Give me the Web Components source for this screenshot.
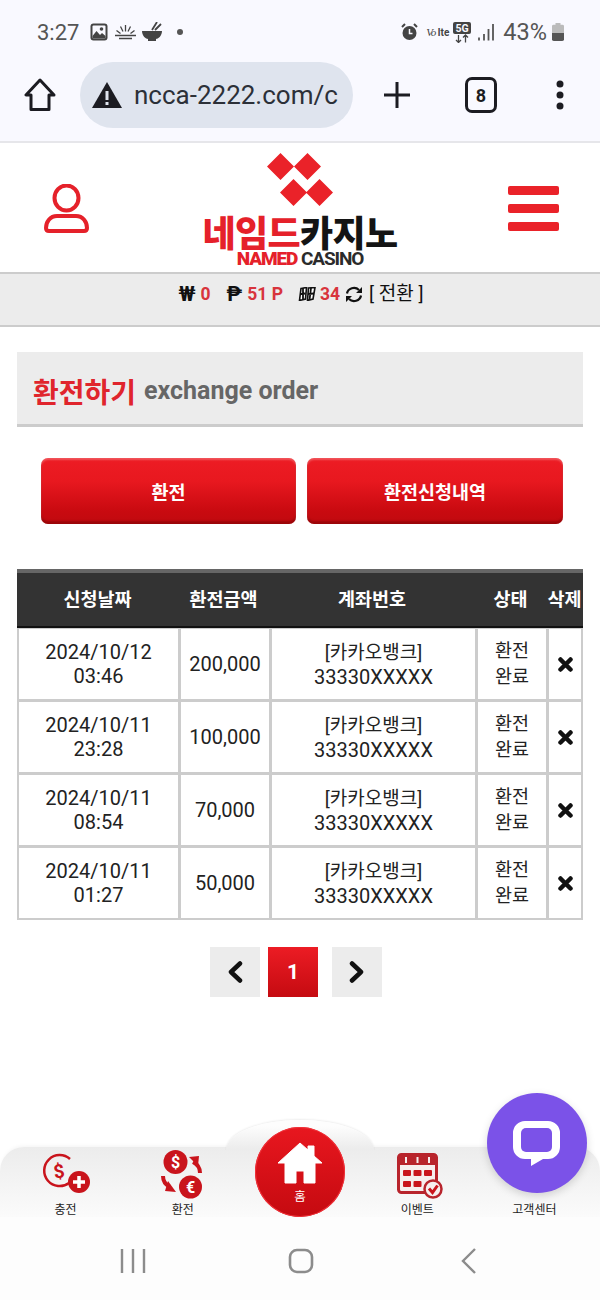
<!DOCTYPE html>
<html lang="ko">
<head>
<meta charset="utf-8">
<title>환전하기</title>
<style>
    html, body { margin: 0; height: 100%; }
    body {
        display: flex;
        flex-direction: column;
        height: 1300px;
        overflow: hidden;
        background: #fff;
        color: #222;
        font-family: Roboto, "Noto Sans CJK KR", sans-serif;
    }
    main-area { flex: 1; }
</style>
</head>
<body>
<status-bar></status-bar>
<browser-bar url="ncca-2222.com/c" tabs="8"></browser-bar>
<site-header></site-header>
<balance-bar></balance-bar>
<main-area>
    <page-title sub="exchange order">환전하기</page-title>
    <action-buttons>
        <red-button>환전</red-button>
        <red-button>환전신청내역</red-button>
    </action-buttons>
    <order-table>
        <order-row date="2024/10/12" time="03:46" amount="200,000"></order-row>
        <order-row date="2024/10/11" time="23:28" amount="100,000"></order-row>
        <order-row date="2024/10/11" time="08:54" amount="70,000"></order-row>
        <order-row date="2024/10/11" time="01:27" amount="50,000"></order-row>
    </order-table>
    <page-nav></page-nav>
</main-area>
<bottom-nav></bottom-nav>
<android-nav></android-nav>

<script>
class StatusBar extends HTMLElement {
    constructor() {
        super();
        this.attachShadow({ mode: 'open' });
    }

    connectedCallback() {
        this.shadowRoot.innerHTML = `
            <style>
            :host {
                display: flex;
                align-items: center;
                height: 63px;
                padding: 1px 36px 0 37px;
                box-sizing: border-box;
                background: #f9f9ff;
                color: #555;
                font-size: 22px;
            }
            svg { display: block; flex: none; }
            .group { display: flex; align-items: center; }
            .right { margin-left: auto; }
            .volte { margin-left: 8px; width: 22px; white-space: nowrap; color: #444; font: 700 10px Roboto, sans-serif; }
            .volte i { font: italic 400 11px "Liberation Serif", serif; letter-spacing: -1px; }
            </style>
            <div class="group">
                <span>3:27</span>
                <svg style="margin-left:11px" width="18" height="18" viewBox="0 0 18 18"><rect x="0.500" y="0.500" width="17" height="17" rx="3" fill="#444"/><rect x="2.500" y="2.500" width="13" height="13" rx="1" fill="#f9f9ff"/><circle cx="11.500" cy="6" r="1.800" fill="#444"/><path d="M2.500 13l4-5 3.500 4 2-2 3.500 3v2.500h-13z" fill="#444"/></svg>
                <svg style="margin-left:7px" width="21" height="18" viewBox="0 0 21 18"><path d="M0 12.500h21M4 15.500h13M10.500 2v6.500M5.500 3.500l2.500 5M15.500 3.500l-2.500 5M1.500 7.500l4 3M19.500 7.500l-4 3" stroke="#444" stroke-width="1.300" fill="none"/></svg>
                <svg style="margin-left:6px" width="20" height="20" viewBox="0 0 20 20"><path d="M0 9h20c0 5-4 8-6 8v2H6v-2c-2 0-6-3-6-8z" fill="#444"/><path d="M10 8l5-8M13 8l6-6" stroke="#444" stroke-width="1.800"/></svg>
                <svg style="margin-left:15px" width="6" height="6" viewBox="0 0 6 6"><circle cx="3" cy="3" r="3" fill="#555"/></svg>
            </div>
            <div class="group right">
                <svg width="17" height="18" viewBox="0 0 17 18"><circle cx="8.500" cy="10" r="7" fill="#444"/><path d="M8.500 6v4.500h3" stroke="#f9f9ff" stroke-width="1.500" fill="none"/><path d="M1 4l3-3M16 4l-3-3" stroke="#444" stroke-width="2"/></svg>
                <span class="volte"><i>Vo</i> lte</span>
                <svg style="margin-left:5px" width="18" height="21" viewBox="0 0 18 21"><rect width="18" height="12" rx="2" fill="#444"/><text x="9" y="10" text-anchor="middle" font-family="Roboto" font-weight="700" font-size="10.500" fill="#f9f9ff">5G</text><path d="M5.500 13v7.500M3 18l2.500 2.500L8 18M12.500 20.500V13M10 15.500l2.500-2.500 2.500 2.500" stroke="#444" stroke-width="1.300" fill="none"/></svg>
                <svg style="margin-left:7px" width="16" height="18" viewBox="0 0 16 18"><path d="M1 14.500v3M6 11v6.500M10.500 6v11.500M15 1v16.500" stroke="#555" stroke-width="1.800"/></svg>
                <span style="margin-left:9px;font-size:23.500px">43%</span>
                <svg style="margin-left:5px" width="12" height="18" viewBox="0 0 12 20" preserveAspectRatio="none"><path d="M3.500 0h5v2h2a1.500 1.500 0 0 1 1.500 1.500V18a2 2 0 0 1-2 2H2a2 2 0 0 1-2-2V3.500A1.500 1.500 0 0 1 1.500 2h2z" fill="#bbb"/><path d="M0 11h12v7a2 2 0 0 1-2 2H2a2 2 0 0 1-2-2z" fill="#555"/></svg>
            </div>
        `;
    }
}

class BrowserBar extends HTMLElement {
    constructor() {
        super();
        this.attachShadow({ mode: 'open' });
    }

    connectedCallback() {
        this.shadowRoot.innerHTML = `
            <style>
            :host {
                display: flex;
                align-items: center;
                height: 80px;
                padding-left: 24px;
                box-sizing: border-box;
                background: #f9f9ff;
                border-bottom: 2px solid #e6e6ea;
                color: #1c1c22;
            }
            svg { display: block; flex: none; }
            .url {
                display: flex;
                align-items: center;
                width: 273px;
                height: 66px;
                margin: -14px 0 0 24px;
                padding-left: 11px;
                box-sizing: border-box;
                border-radius: 33px;
                background: #dfe4ee;
                font-size: 26px;
                white-space: nowrap;
                overflow: hidden;
            }
            .url span { margin-left: 11px; color: #2c3038; }
            .tools { display: flex; align-items: center; margin-top: -14px; }
            .tabs {
                display: flex;
                align-items: center;
                justify-content: center;
                width: 26px;
                height: 30px;
                margin-left: 54px;
                border: 3px solid #1c1c22;
                border-radius: 7px;
                font-size: 18px;
                font-weight: 700;
            }
            </style>
            <svg style="margin-top:-14px" width="32" height="34" viewBox="0 0 32 34"><path d="M16 2L2 17h5v14.500h18V17h5z" fill="none" stroke="#1c1c22" stroke-width="3" stroke-linejoin="round"/></svg>
            <div class="url">
                <svg width="32" height="28" viewBox="0 0 32 28"><path d="M16 1L31 27H1z" fill="#1c1c22"/><path d="M14.500 10h3v9h-3zM14.500 21h3v3h-3z" fill="#dfe4ee"/></svg>
                <span>${this.getAttribute('url')}</span>
            </div>
            <div class="tools">
                <svg style="margin-left:30px" width="28" height="28" viewBox="0 0 28 28"><path d="M14 1v26M1 14h26" stroke="#1c1c22" stroke-width="3"/></svg>
                <div class="tabs">${this.getAttribute('tabs')}</div>
                <svg style="margin-left:58px" width="10" height="30" viewBox="0 0 10 30"><circle cx="5" cy="4" r="3.500" fill="#1c1c22"/><circle cx="5" cy="15" r="3.500" fill="#1c1c22"/><circle cx="5" cy="26" r="3.500" fill="#1c1c22"/></svg>
            </div>
        `;
    }
}

class SiteHeader extends HTMLElement {
    constructor() {
        super();
        this.attachShadow({ mode: 'open' });
    }

    connectedCallback() {
        this.shadowRoot.innerHTML = `
            <style>
            :host {
                display: grid;
                grid-template-columns: 1fr auto 1fr;
                align-items: center;
                height: 131px;
                box-sizing: border-box;
                border-bottom: 2px solid #ccc;
                background: #fff;
            }
            svg { display: block; }
            .user { margin: 3px 0 0 44px; }
            .menu { margin: 1px 41px 0 auto; display: grid; gap: 9px; }
            .menu i { display: block; width: 51px; height: 9px; border-radius: 2px; background: #ea2229; }
            .logo { align-self: start; display: flex; flex-direction: column; align-items: center; padding-top: 10px; }
            .ko {
                margin-top: 7px;
                font: 900 36px/37px "Noto Sans CJK KR", sans-serif;
                letter-spacing: -.6px;
                white-space: nowrap;
                color: #141414;
            }
            .ko b { font-weight: 900; color: #e5212a; }
            .en {
                font: 700 19px/17px Roboto, sans-serif;
                letter-spacing: -1.100px;
                white-space: nowrap;
                color: #2b2b2b;
            }
            .en b { color: #e5212a; }
            </style>
            <svg class="user" width="45" height="50" viewBox="0 0 45 50"><ellipse cx="22.500" cy="14" rx="12" ry="12.500" fill="none" stroke="#e5212a" stroke-width="4"/><path d="M13 32h19c7 0 11 6 11 12 0 2-1 3-3 3H5c-2 0-3-1-3-3 0-6 4-12 11-12z" fill="none" stroke="#e5212a" stroke-width="4" stroke-linejoin="round"/></svg>
            <div class="logo">
                <svg width="66" height="53" viewBox="0 0 66 53"><path d="M13.500 0L27 13.500 13.500 27 0 13.500zM40.500 0L54 13.500 40.500 27 27 13.500zM26.500 26L40 39.500 26.500 53 13 39.500zM52.500 26L66 39.500 52.500 53 39 39.500z" fill="#ea2229"/></svg>
                <div class="ko"><b>네임드</b>카지노</div>
                <div class="en"><b>NAMED</b> CASINO</div>
            </div>
            <div class="menu"><i></i><i></i><i></i></div>
        `;
    }
}

class BalanceBar extends HTMLElement {
    constructor() {
        super();
        this.attachShadow({ mode: 'open' });
    }

    connectedCallback() {
        this.shadowRoot.innerHTML = `
            <style>
            :host {
                display: flex;
                justify-content: center;
                height: 53px;
                box-sizing: border-box;
                padding: 7px 0 0 2px;
                border-bottom: 2px solid #ccc;
                background: #ececec;
                font-size: 17.500px;
                line-height: 26px;
                color: #111;
            }
            .row { display: flex; align-items: flex-start; white-space: nowrap; }
            b { font-weight: 700; color: #d8343c; }
            .sym { font-size: 21px; font-weight: 700; }
            .swap { font-size: 19px; }
            svg { display: block; }
            </style>
            <div class="row">
                <span class="sym">₩</span><b style="margin-left:5px">0</b>
                <span class="sym" style="margin-left:16px">₱</span><b style="margin-left:5px">51 P</b>
                <svg style="margin:6px 0 0 15px" width="18" height="14" viewBox="0 0 18 14"><path d="M3 1.500l5.500-1L7.500 12l-6 1.500zM10.500 1l6.500-.5L15 12l-5.500 1.500z" fill="#fff" stroke="#111" stroke-width="1.600"/><path d="M2.500 7l5-.5M10 7l6-.5M5 1v12M13 1l-1.500 12" stroke="#111" stroke-width="1.800"/></svg>
                <b style="margin-left:4px">34</b>
                <svg style="margin:5px 0 0 5px" width="18" height="17" viewBox="0 0 18 17"><path d="M2 7.500a7 6.500 0 0 1 12-3.500M16 9.500a7 6.500 0 0 1-12 3.500" fill="none" stroke="#111" stroke-width="2.200"/><path d="M17 1v6h-6zM1 16v-6h6z" fill="#111"/></svg>
                <span class="swap" style="margin-left:6px">[ 전환 ]</span>
            </div>
        `;
    }
}

class PageTitle extends HTMLElement {
    constructor() {
        super();
        this.attachShadow({ mode: 'open' });
    }

    connectedCallback() {
        this.shadowRoot.innerHTML = `
            <style>
            :host {
                display: flex;
                align-items: center;
                gap: 8px;
                height: 75px;
                margin: 25px 17px 0;
                padding: 5px 16px 0;
                box-sizing: border-box;
                border-bottom: 3px solid #ccc;
                background: #ececec;
                font-weight: 700;
            }
            .ko { font-size: 28px; color: #e0252d; }
            .sub { font-size: 25px; color: #666; }
            </style>
            <span class="ko"><slot></slot></span>
            <span class="sub">${this.getAttribute('sub')}</span>
        `;
    }
}

class ActionButtons extends HTMLElement {
    constructor() {
        super();
        this.attachShadow({ mode: 'open' });
        this.shadowRoot.innerHTML = `
            <style>
            :host {
                display: grid;
                grid-template-columns: 255px 256px;
                gap: 11px;
                margin: 31px 37px 0 41px;
            }
            </style>
            <slot></slot>
        `;
    }
}

class RedButton extends HTMLElement {
    constructor() {
        super();
        this.attachShadow({ mode: 'open' });
        this.shadowRoot.innerHTML = `
            <style>
            :host {
                display: flex;
                align-items: center;
                justify-content: center;
                height: 66px;
                border-radius: 7px;
                background: linear-gradient(#ed1c24 0%, #e8181f 35%, #c90a10 80%, #c00a0f 100%);
                box-shadow: inset 0 2px 2px rgba(255,255,255,.25), inset 0 -3px 2px rgba(110,0,0,.45);
                color: #fff;
                font-size: 18.500px;
                font-weight: 700;
            }
            </style>
            <slot></slot>
        `;
    }
}

class OrderTable extends HTMLElement {
    constructor() {
        super();
        this.attachShadow({ mode: 'open' });
        this.shadowRoot.innerHTML = `
            <style>
            :host {
                display: block;
                margin: 45px 17px 0;
                background: #ccc;
            }
            .head {
                display: grid;
                grid-template-columns: 161px 91px 206px 71px 37px;
                align-items: center;
                height: 59px;
                padding-bottom: 3px;
                box-sizing: border-box;
                border-top: 4px solid #666;
                border-bottom: 2px solid #111;
                background: #333;
                color: #fff;
                font-size: 18.500px;
                font-weight: 700;
                text-align: center;
                white-space: nowrap;
            }
            .rows {
                display: grid;
                row-gap: 3px;
                padding: 1px 2px 2px;
            }
            </style>
            <div class="head">
                <span>신청날짜</span><span>환전금액</span><span>계좌번호</span><span>상태</span><span>삭제</span>
            </div>
            <div class="rows"><slot></slot></div>
        `;
    }
}

class OrderRow extends HTMLElement {
    constructor() {
        super();
        this.attachShadow({ mode: 'open' });
    }

    connectedCallback() {
        this.shadowRoot.innerHTML = `
            <style>
            :host {
                display: grid;
                grid-template-columns: 159px 88px 203px 68px 32px;
                column-gap: 3px;
                height: 70px;
                font-size: 20px;
                line-height: 24px;
                color: #222;
            }
            div {
                display: flex;
                align-items: center;
                justify-content: center;
                background: #fff;
                text-align: center;
            }
            .bank { font-size: 19px; }
            .status { font-size: 18.500px; line-height: 26px; }
            svg { display: block; }
            </style>
            <div><span>${this.getAttribute('date')}<br>${this.getAttribute('time')}</span></div>
            <div>${this.getAttribute('amount')}</div>
            <div><span><span class="bank">[카카오뱅크]</span><br>33330XXXXX</span></div>
            <div class="status"><span>환전<br>완료</span></div>
            <div><svg width="15" height="15" viewBox="0 0 15 15"><path d="M2.500 2.500l10 10M12.500 2.500l-10 10" stroke="#111" stroke-width="4.500" stroke-linecap="round"/></svg></div>
        `;
    }
}

class PageNav extends HTMLElement {
    constructor() {
        super();
        this.attachShadow({ mode: 'open' });
    }

    connectedCallback() {
        this.shadowRoot.innerHTML = `
            <style>
            :host {
                display: flex;
                justify-content: center;
                margin-top: 27px;
                padding-right: 8px;
            }
            div {
                display: flex;
                align-items: center;
                justify-content: center;
                width: 50px;
                height: 50px;
                background: #ececec;
            }
            .on {
                margin: 0 14px 0 8px;
                background: linear-gradient(#ec1c24, #c50b11);
                color: #fff;
                font-size: 21px;
                font-weight: 700;
            }
            </style>
            <div><svg width="16" height="22" viewBox="0 0 16 22"><path d="M13 2.500L4 11l9 8.500" fill="none" stroke="#111" stroke-width="4.500" stroke-linecap="round" stroke-linejoin="round"/></svg></div>
            <div class="on">1</div>
            <div><svg width="16" height="22" viewBox="0 0 16 22"><path d="M3 2.500L12 11l-9 8.500" fill="none" stroke="#111" stroke-width="4.500" stroke-linecap="round" stroke-linejoin="round"/></svg></div>
        `;
    }
}

class BottomNav extends HTMLElement {
    constructor() {
        super();
        this.attachShadow({ mode: 'open' });
    }

    connectedCallback() {
        const red = '#c9141c';
        this.shadowRoot.innerHTML = `
            <style>
            :host {
                position: relative;
                display: grid;
                grid-template-columns: repeat(5, 1fr);
                height: 70px;
                padding: 0 7px;
                background: linear-gradient(#ececec, #fbfbfb);
                border-radius: 24px 24px 0 0;
                box-shadow: 0 -3px 5px -3px rgba(0,0,0,.07);
            }
            .bump {
                position: absolute;
                left: 226px;
                top: -27px;
                width: 148px;
                height: 60px;
                border-radius: 50%;
                background: linear-gradient(#fdfdfd 10%, #ececec 48%);
                box-shadow: 0 -1px 2px rgba(0,0,0,.07);
                clip-path: inset(-6px -6px 30px -6px);
            }
            .item {
                position: relative;
                display: flex;
                flex-direction: column;
                align-items: center;
                height: 70px;
                font-size: 12px;
                color: #222;
                white-space: nowrap;
            }
            .item svg, .item .blank { display: block; height: 50px; margin-top: 3px; overflow: visible; }
            .item span { margin-top: 3px; line-height: 14px; }
            .home {
                position: absolute;
                left: 255px;
                top: -20px;
                display: flex;
                flex-direction: column;
                align-items: center;
                width: 90px;
                height: 90px;
                box-sizing: border-box;
                border-radius: 50%;
                background: linear-gradient(#e8171f, #c50a10);
                box-shadow: inset 0 0 0 1px #f0323a;
                color: #fff;
                font-size: 12.500px;
            }
            .home svg { display: block; margin-top: 15px; }
            .home span { margin-top: 5px; line-height: 16px; }
            .chat {
                position: absolute;
                left: 487px;
                top: -54px;
                display: flex;
                align-items: center;
                justify-content: center;
                width: 100px;
                height: 100px;
                border-radius: 50%;
                background: #7b52e8;
                box-shadow: 0 3px 8px rgba(0,0,0,.15);
            }
            .chat svg { display: block; }
            </style>
            <div class="bump"></div>
            <div class="item">
                <svg width="50" viewBox="0 0 50 50"><path d="M29 9a15.500 15.500 0 1 0-1 24" fill="none" stroke="${red}" stroke-width="2.500"/><text x="18" y="28" text-anchor="middle" font-family="Roboto" font-weight="700" font-size="19" fill="${red}" transform="rotate(-10 18 21)">$</text><circle cx="38" cy="32" r="11" fill="${red}"/><path d="M38 26v12M32 32h12" stroke="#fff" stroke-width="3.500"/></svg>
                <span>충전</span>
            </div>
            <div class="item">
                <svg width="50" viewBox="0 0 50 50"><circle cx="17.500" cy="12" r="12" fill="${red}"/><text x="17.500" y="18" text-anchor="middle" font-family="Roboto" font-weight="700" font-size="16" fill="#fff">$</text><circle cx="32.500" cy="37" r="11.500" fill="${red}"/><text x="32.500" y="43" text-anchor="middle" font-family="Roboto" font-weight="700" font-size="16" fill="#fff">€</text><path d="M42 23c0-6-3-9-7-11" fill="none" stroke="${red}" stroke-width="4"/><path d="M31 7l10-1-1 10z" fill="${red}"/><path d="M5 26c0 6 3 9 7 11" fill="none" stroke="${red}" stroke-width="4"/><path d="M18 42l-11-1 3-10z" fill="${red}"/></svg>
                <span>환전</span>
            </div>
            <div class="item"></div>
            <div class="item">
                <svg width="50" viewBox="0 0 50 50"><rect x="6.500" y="4.500" width="38" height="38" rx="3" fill="#f6eeee" stroke="#b8242c" stroke-width="3"/><path d="M6 6h39v9H6z" fill="#b8242c"/><g fill="${red}"><rect x="11" y="20" width="8" height="6" rx="1"/><rect x="21.500" y="20" width="8" height="6" rx="1"/><rect x="32" y="20" width="8" height="6" rx="1"/><rect x="11" y="31" width="8" height="6" rx="1"/><rect x="21.500" y="31" width="8" height="6" rx="1"/></g><path d="M14 7v6M25.500 7v6M37 7v6" stroke="#f6eeee" stroke-width="2"/><circle cx="41" cy="39" r="8.500" fill="#f6eeee" stroke="#b8242c" stroke-width="2.500"/><path d="M37 38.500l3.500 4 5-7" fill="none" stroke="${red}" stroke-width="3"/></svg>
                <span>이벤트</span>
            </div>
            <div class="item"><div class="blank"></div><span>고객센터</span></div>
            <div class="home">
                <svg width="46" height="42" viewBox="0 0 46 42"><path d="M23 1L1 21h7v20h11V29h8v12h11V21h7l-8-7V4h-6v4z" fill="#fff" stroke="#fff" stroke-linejoin="round"/></svg>
                <span>홈</span>
            </div>
            <div class="chat">
                <svg width="48" height="50" viewBox="0 0 48 50"><path d="M12 3h23a12 12 0 0 1 12 12v14a12 12 0 0 1-12 12h-5L18 48v-7h-6A12 12 0 0 1 0 29V15A12 12 0 0 1 12 3z" fill="#fff"/><rect x="8" y="10" width="31" height="24" rx="5" fill="#7b52e8"/></svg>
            </div>
        `;
    }
}

class AndroidNav extends HTMLElement {
    constructor() {
        super();
        this.attachShadow({ mode: 'open' });
    }

    connectedCallback() {
        this.shadowRoot.innerHTML = `
            <style>
            :host {
                display: grid;
                grid-template-columns: 146px 288px 1fr;
                align-items: center;
                height: 83px;
                padding-left: 120px;
                padding-top: 4px;
                box-sizing: border-box;
                background: #fdfdfd;
            }
            svg { display: block; }
            </style>
            <svg width="26" height="26" viewBox="0 0 26 26"><path d="M2 1v24M13 1v24M24 1v24" stroke="#8c8c8c" stroke-width="2.400"/></svg>
            <svg style="margin-left:22px" width="26" height="26" viewBox="0 0 26 26"><rect x="2" y="2" width="22" height="22" rx="7" fill="none" stroke="#8c8c8c" stroke-width="2.600"/></svg>
            <svg style="margin-left:-94px" width="18" height="28" viewBox="0 0 18 28"><path d="M15 2L3 14l12 12" fill="none" stroke="#8c8c8c" stroke-width="2.400"/></svg>
        `;
    }
}

customElements.define('status-bar', StatusBar);
customElements.define('browser-bar', BrowserBar);
customElements.define('site-header', SiteHeader);
customElements.define('balance-bar', BalanceBar);
customElements.define('page-title', PageTitle);
customElements.define('action-buttons', ActionButtons);
customElements.define('red-button', RedButton);
customElements.define('order-table', OrderTable);
customElements.define('order-row', OrderRow);
customElements.define('page-nav', PageNav);
customElements.define('bottom-nav', BottomNav);
customElements.define('android-nav', AndroidNav);
</script>
</body>
</html>
